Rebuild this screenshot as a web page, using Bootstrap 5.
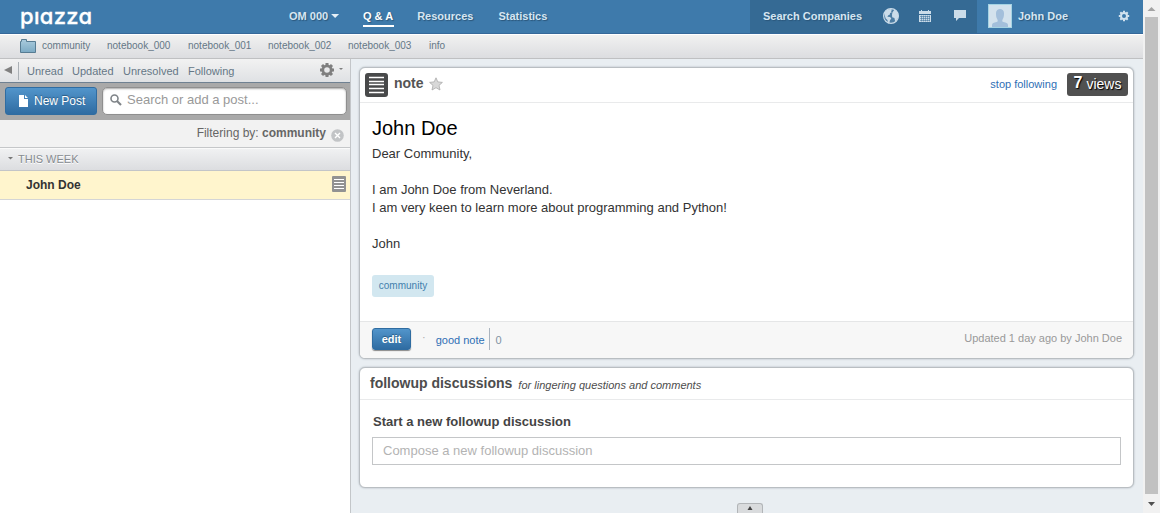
<!DOCTYPE html>
<html lang="en">
<head>
<meta charset="utf-8">
<meta name="viewport" content="width=device-width, initial-scale=1">
<title>Piazza</title>
<link href="https://cdn.jsdelivr.net/npm/bootstrap@5.3.0/dist/css/bootstrap.min.css" rel="stylesheet">
<style>
body{font-family:"Liberation Sans",Arial,sans-serif;font-size:12px;line-height:16px;color:#333;height:513px;overflow:hidden;background:#e9eef2}
a{text-decoration:none}
svg{display:block;flex:none}
.item{white-space:nowrap;flex:none}
.page{width:1143px;height:513px}
.topbar{height:34px;background:#3e7aab;border-bottom:1px solid #35689a;font-size:11px;font-weight:700;color:#d6e6f2;text-shadow:1px 1px 1px #2b567a;padding:0 0 1px 20px}
.topbar a{color:inherit}
.topbar .brand-name{font:500 22px/32px Inter,sans-serif;font-feature-settings:"cv11";letter-spacing:.3px;color:#fff;width:269px;text-shadow:none;-webkit-text-stroke:.3px #fff}
.topbar .current{color:#fff;position:relative}
.current::after{content:"";position:absolute;left:0;right:-1px;bottom:-3px;height:2px;background:#fff}
.caret{flex:none;width:8px;height:4px;margin-left:3px;background:#e6f0f7;clip-path:polygon(0 0,100% 0,50% 100%)}
.tools{width:227px;height:34px;background:#356a94;padding-left:13px}
.avatar{width:24px;height:24px;border:1px solid #a5d3e3;background:#d3e2ed;overflow:hidden}
.folders{height:25px;border-top:1px solid #fff;border-bottom:1px solid #bfc0c2;background:linear-gradient(#f1f1f1,#dcdde0);font-size:10px;color:#657786;padding:0 0 2px 20px}
.folders a,.filters a{color:inherit}
.sidebar{width:351px;background:#fff;border-right:1px solid #c3c6c9}
.filters{height:24px;border-bottom:1px solid #6f8192;background:linear-gradient(#f2f2f2,#dfe1e4);font-size:11px;color:#657786}
.search-row{height:37px;background:#a9a9a9;padding:0 3px 1px 5px}
.btn-blue{background:linear-gradient(#5295cb,#2f6ca2);color:#fff;border:1px solid #2f6ca1;border-radius:3px;text-shadow:0 -1px 1px #28577f;line-height:16px}
.btn-new{width:92px;height:28px;font-size:12px;padding:0 0 0 13px}
.search-box{width:245px;height:28px;background:#fff;border:1px solid #8f8f8f;border-radius:5px;box-shadow:inset 0 1px 2px #aaa;color:#999;padding:0 0 2px 7px}
.filter-by{height:28px;background:#f2f2f2;border-bottom:1px solid #c5c7c9;color:#666;padding:0 6px 2px 0}
.week{height:23px;border-top:1px solid #fafafa;border-bottom:1px solid #c3c5c8;background:linear-gradient(#f0f1f2,#dcdde0);font-size:11px;color:#868b90;text-shadow:0 1px 0 #fff;padding:0 0 2px 8px}
.post{height:29px;background:#fff5cd;border-bottom:1px solid #d4d5d6;font-weight:700;color:#333;padding:0 4px 0 26px}
.main{padding:8px 9px 0 8px;position:relative}
.panel{border:1px solid #b9bec2;border-radius:6px;box-shadow:0 0 2px #a4adb5;background:#fff;--bs-card-color:#333}
.panel-note{height:292px;margin-bottom:8px}
.panel-follow{height:121px}
.note-head{height:35px;border-bottom:1px solid #e9eaeb;padding:0 5px}
.note-text{height:218px;padding:15px 12px 0;font-size:13px;line-height:18px}
.note-text h1{font-size:20px;line-height:20px;color:#000;margin:0 0 7px;font-weight:400}
.tag{width:62px;height:22px;border-radius:3px;background:#d2e7f0;color:#4380ad;font-size:10px;line-height:22px;margin-top:22px}
.note-foot{height:37px;background:#f7f7f7;border-top:1px solid #e5e6e7;border-radius:0 0 5px 5px;padding:0 11px 2px 12px;font-size:11px;color:#999}
.link-blue{color:#2f6fb5}
.btn-edit{width:39px;height:22px;font-size:11px;font-weight:700;padding:0;box-shadow:0 1px 1px #888}
.views{width:61px;height:23px;border-radius:3px;background:#505050;color:#fff;text-shadow:1px 1px 1px #000;font-size:14px}
.follow-head{height:32px;border-bottom:1px solid #e9eaeb;padding:0 10px 1px;color:#4d4d4d}
.compose{height:28px;width:749px;border:1px solid #c4c6c8;border-radius:0;color:#b3b3b3;font-size:13px;padding:0 10px}
.drawer-tab{position:absolute;left:386px;bottom:0;width:26px;height:10px;background:#d9dbdd;border:1px solid #b2b5b8;border-bottom:0;border-radius:3px 3px 0 0}
.scroller{width:17px;height:513px;background:#f1f1f1}
.thumb{width:13px;height:477px;background:#c1c1c1}
</style>
</head>
<body>
<div class="d-flex">
<div class="page d-flex flex-column">
  <header class="topbar d-flex align-items-center">
    <a class="brand-name item" href="#" aria-label="piazza">pıazza</a>
    <a class="item d-flex align-items-center" href="#" style="width:74px">OM 000 <span class="caret"></span></a>
    <a class="item current me-4" href="#">Q &amp; A</a>
    <a class="item me-4" href="#">Resources</a>
    <a class="item" href="#" style="margin-left:1px">Statistics</a>
    <div class="tools d-flex align-items-center ms-auto item">
      <a class="item" href="#" style="width:120px">Search Companies</a>
      <svg width="16" height="16" viewBox="0 0 16 16"><circle cx="8" cy="8" r="7.4" fill="#4d7da3" stroke="#cbdce9" stroke-width="1.2"/><path fill="#cbdce9" d="M1.500 4.500 4 2l3.500-1 1.600.8L8 3.200l.8 1-1.700.7-.4 1.900-1.400.5-.9 1.400 2.700.3 1.200 1.500-1.300 1.800-.6 2.600-1.300.5-.7-3.400-1.700-1.600-.8-2.500zM9.400 4.500l1.900-2.700 2.300 1.500 1.600 3.500v2.600l-1.300 2.400-1.700 1.600-.8-3.500-2.200-.6L9 6.800z"/></svg>
      <svg width="12" height="13" viewBox="0 0 12 13" style="margin-left:20px"><path fill="#cbdce9" d="M0 1h2V0h1v1h6V0h1v1h2v3H0zM0 5h12v7H0z"/><path stroke="#356a94" d="M2.500 5.500v6M4.500 5.500v6M6.500 5.500v6M8.500 5.500v6M10.500 5.500v6M1 6.500h10M1 8.500h10M1 10.500h10" stroke-width=".5"/></svg>
      <svg width="12" height="12" viewBox="0 0 12 12" style="margin-left:23px"><path fill="#cbdce9" d="M0 0h12v8H5l-3 3V8H0z"/></svg>
    </div>
    <a class="item d-flex align-items-center" href="#" style="width:141px;padding-left:11px">
      <span class="avatar"><svg width="22" height="22" viewBox="0 0 22 22"><path fill="#a3bfdb" d="M3 22v-2c0-2 2-2.500 4.500-3 1.500-.4 1.500-1.500.8-2.800C7 12.500 7 10 7 8c0-5.300 8-5.300 8 0 0 2 0 4.500-1.300 6.200-.7 1.300-.7 2.400.8 2.800 2.500.5 4.500 1 4.500 3v2z"/></svg></span>
      <span style="margin-left:6px">John Doe</span>
    </a>
    <svg width="12" height="12" viewBox="-6 -6 12 12" style="margin-right:13px"><g fill="none" stroke="#d3e3ef"><circle r="3" stroke-width="2"/><path stroke-width="2" d="M0-3.500v-1.700M0 3.500v1.700M3.500 0h1.700M-3.500 0h-1.700M2.500 2.500l1.200 1.200M-2.500-2.500l-1.200-1.200M2.500-2.500l1.200-1.200M-2.500 2.500l-1.200 1.200"/></g></svg>
  </header>
  <nav class="folders d-flex align-items-center">
    <svg width="16" height="14" viewBox="0 0 16 14"><defs><linearGradient id="fold" x2="0" y2="1"><stop stop-color="#aacbdd"/><stop offset="1" stop-color="#7caac4"/></linearGradient></defs><path fill="url(#fold)" stroke="#577c93" d="M.5 13.500V2.500H1.500V.5H6.500V2.500H15.500V13.500z"/></svg>
    <a class="item" href="#" style="width:65px;margin-left:6px">community</a>
    <a class="item" href="#" style="width:81px">notebook_000</a>
    <a class="item" href="#" style="width:80px">notebook_001</a>
    <a class="item" href="#" style="width:80px">notebook_002</a>
    <a class="item" href="#" style="width:81px">notebook_003</a>
    <a class="item" href="#">info</a>
  </nav>
  <div class="d-flex flex-grow-1">
    <aside class="sidebar item">
      <div class="filters d-flex align-items-center">
        <svg width="27" height="18" viewBox="0 0 27 18"><path fill="#808080" d="M4 8 12 4v8z"/><path stroke="#aab0b5" d="M18.500 0v18"/></svg>
        <a class="item" href="#" style="width:45px">Unread</a>
        <a class="item" href="#" style="width:51px">Updated</a>
        <a class="item" href="#" style="width:65px">Unresolved</a>
        <a class="item" href="#">Following</a>
        <svg class="ms-auto" width="24" height="16" viewBox="-7 -7 24 16"><g fill="none" stroke="#7f7f7f"><circle r="4.200" stroke-width="2.800"/><path stroke-width="3" d="M0-5v-2M0 5v2M5 0h2M-5 0h-2M3.500 3.500l1.500 1.500M-3.500-3.500l-1.500-1.500M3.500-3.500l1.500-1.500M-3.500 3.500l-1.500 1.500"/></g><path fill="#7f7f7f" d="M12-2h4l-2 2z"/></svg><span style="width:6px"></span>
      </div>
      <div class="search-row d-flex align-items-center justify-content-between">
        <button class="btn btn-blue btn-new d-flex align-items-center gap-2"><svg width="9" height="12" viewBox="0 0 9 12"><path fill="#fff" d="M0 0h5v4h4v8H0zM6 0l3 3H6z"/></svg><span class="item" style="margin-left:-2px">New Post</span></button>
        <div class="search-box d-flex align-items-center"><svg width="12" height="12" viewBox="0 0 12 12"><g fill="none" stroke="#7f8488"><circle cx="4.500" cy="4.500" r="3.500" stroke-width="1.600"/><path stroke-width="2.200" d="m7 7 4 4"/></g></svg><span style="margin-left:5px;font-size:13px">Search or add a post...</span></div>
      </div>
      <div class="filter-by d-flex align-items-center justify-content-end"><span class="item">Filtering by: <b>community</b></span><svg width="13" height="13" viewBox="0 0 13 13" style="margin:5px 0 0 5px"><circle cx="6.500" cy="6.500" r="6.300" fill="#c2c4c6"/><path stroke="#fff" stroke-width="1.400" d="m4 4 5 5M9 4 4 9"/></svg></div>
      <div class="week d-flex align-items-center"><svg width="5" height="3" viewBox="0 0 5 3"><path fill="#777" d="M0 0h5L2.500 2.500z"/></svg><span style="margin-left:5px">THIS WEEK</span></div>
      <div class="post d-flex align-items-center justify-content-between"><span>John Doe</span><svg width="14" height="16" viewBox="0 0 14 16" style="margin-top:-3px"><rect width="14" height="16" rx="1" fill="#929292"/><path stroke="#fff" d="M2 3.500h10M2 6.500h10M2 9.500h10M2 12.500h10"/></svg></div>
    </aside>
    <main class="main flex-grow-1">
      <section class="card panel panel-note">
        <div class="note-head d-flex align-items-center">
          <svg width="23" height="24" viewBox="0 0 23 24"><rect width="23" height="24" rx="3" fill="#48494a"/><path stroke="#fff" d="M4 4.500h15M4 8.500h15M4 11.500h15M4 15.500h15M4 19.500h15" stroke-width="1.300"/></svg>
          <b class="item" style="font-size:14px;color:#555;margin:-4px 0 0 6px">note</b>
          <svg width="14" height="14" viewBox="0 0 14 14" style="margin:-3px 0 0 5px"><path fill="#d8d8d8" stroke="#aaa" stroke-width=".8" d="m7 .8 1.800 4.100 4.600.5-3.400 3 1 4.600L7 10.700 3 13l1-4.600-3.400-3 4.600-.5z"/></svg>
          <a class="link-blue item ms-auto" href="#" style="font-size:11px;margin-top:-2px">stop following</a>
          <span class="views d-flex align-items-center justify-content-center gap-1 item" style="margin:-2px 0 0 10px"><b style="font-size:16px;margin-top:-2px">7</b>views</span>
        </div>
        <div class="note-text"><h1>John Doe</h1>Dear Community,<br><br>I am John Doe from Neverland.<br>I am very keen to learn more about programming and Python!<br><br>John
          <div class="tag text-center">community</div>
        </div>
        <div class="note-foot d-flex align-items-center">
          <button class="btn btn-blue btn-edit">edit</button>
          <span style="margin:-4px 9px 0 11px;color:#aaa">·</span>
          <a class="link-blue item" href="#" style="padding-top:2px;margin-left:1px">good note</a>
          <span class="border-start" style="margin-left:4px;padding:4px 0 2px 6px;--bs-border-color:#aab4bf;color:#8193a3">0</span>
          <span class="item ms-auto" style="margin-top:-3px">Updated 1 day ago by John Doe</span>
        </div>
      </section>
      <section class="card panel panel-follow">
        <div class="follow-head d-flex align-items-center"><b class="item" style="font-size:14px">followup discussions</b><i class="item" style="font-size:11px;margin:3px 0 0 6px">for lingering questions and comments</i></div>
        <div style="padding:14px 12px 0"><b class="d-block" style="font-size:13px;margin:0 0 7px 1px;color:#444">Start a new followup discussion</b>
        <div class="compose d-flex align-items-center">Compose a new followup discussion</div></div>
      </section>
      <div class="drawer-tab d-flex align-items-center justify-content-center"><svg width="6" height="5" viewBox="0 0 6 5"><path fill="#444" d="m3 0 2.500 4h-5z"/></svg></div>
    </main>
  </div>
</div>
<div class="scroller d-flex flex-column align-items-center">
  <svg width="17" height="17" viewBox="0 0 17 17"><path fill="#a3a3a3" d="m8.500 7 4 4h-8z"/></svg>
  <div class="thumb"></div>
  <svg width="17" height="19" viewBox="0 0 17 19"><path fill="#505050" d="M5 8h7l-3.500 4z"/></svg>
</div>
</div>
<script src="https://cdn.jsdelivr.net/npm/bootstrap@5.3.0/dist/js/bootstrap.bundle.min.js"></script>
</body>
</html>
